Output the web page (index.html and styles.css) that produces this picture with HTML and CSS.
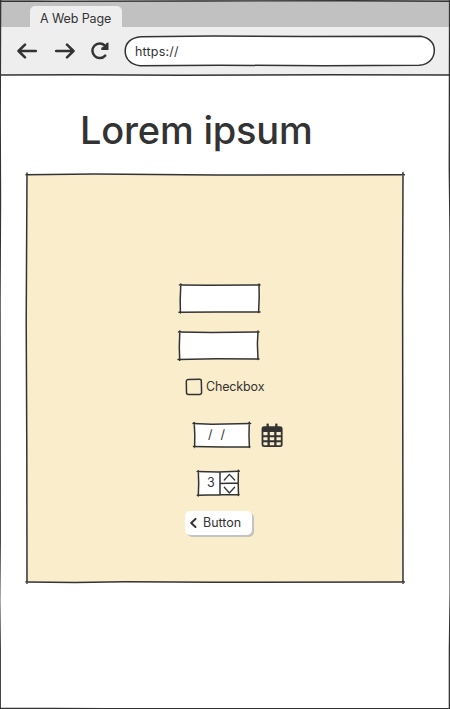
FILE: index.html
```html
<!DOCTYPE html>
<html lang="en">
<head>
<meta charset="utf-8">
<title>A Web Page</title>
<link rel="stylesheet" href="styles.css">
</head>
<body>
<div class="window">
  <header class="chrome">
    <div class="tabs"><div class="tab"><span class="tab-label">A Web Page</span></div></div>
    <div class="toolbar">
      <svg class="nav back" width="20" height="16" viewBox="0 0 20 16"><path d="M19 8H1.5M8 1.7L1.5 8L8 14.3"/></svg>
      <svg class="nav forward" width="20" height="16" viewBox="0 0 20 16"><path d="M1 8H18.5M12 1.7L18.5 8L12 14.3"/></svg>
      <svg class="nav reload" width="20" height="20" viewBox="0 0 20 20"><path d="M14.8 4.5A7.3 7.3 0 1 0 15.2 14.6"/><path class="solid" d="M18.5 1.6V8.9H11.3V6.8L14.5 5L16.6 2Z"/></svg>
      <div class="address">
        <svg class="sketch" viewBox="0 0 312 32"><path class="paper" d="M17 1.8L90 1.1L180 1.5L297 1.3C305 3 310.3 8 310.3 15.5C310.3 23 305 29.5 295 30.3L200 30.7L95 30.2L16 30.7C7 30 1.2 24 1.2 16C1.2 8 7 2.5 17 1.8Z"/></svg>
        <span class="url">https://</span>
      </div>
    </div>
  </header>
  <main>
    <h1>Lorem ipsum</h1>
    <section class="panel">
      <svg class="sketch" viewBox="0 0 380 413"><path class="cream" d="M2 3.5L190 4L378 3.8V411L190 411.3L2 411Z"/><path d="M1 3.8L70 3L190 4L379.5 3.8M378 1.5L377.6 120L378 412.5M379.5 411L190 411.2L100 410.8L50 411.4L1 410.9M2 412.5L1.8 280L1.2 150L2 2"/></svg>
      <div class="field first">
        <svg class="sketch" viewBox="0 0 84 32"><path class="paper" d="M2.8 3L81 3L80.7 29.9L2.2 30.2Z"/><path d="M1.5 3L30 3.3L82 2.9M81 2L81.2 15L80.6 30.5M82 29.9L40 30.1L1 30.2M2.4 31L2.2 18L2.8 2"/></svg>
      </div>
      <div class="field second">
        <svg class="sketch" viewBox="0 0 84 32"><path class="paper" d="M3 3L81 3L81 30L2.5 30Z"/><path d="M1.5 3L35 3.4L82 2.9M81 2L80.4 15L81 30.5M82 30L40 29.8L1 30.4M2.7 31.5L2.3 18L2.8 2"/></svg>
      </div>
      <label class="check">
        <svg width="18" height="18" viewBox="0 0 18 18"><path d="M3 1.5L14.5 1.3Q16.3 1.3 16.3 3L16.6 14.5Q16.5 16.5 14.5 16.5L3.5 16.6Q1.5 16.5 1.5 14.5L1.3 3.3Q1.4 1.5 3 1.5Z"/></svg>
        <span class="check-label">Checkbox</span>
      </label>
      <div class="date-row">
        <div class="date">
          <svg class="sketch" viewBox="0 0 60 28"><path class="paper" d="M2.4 2.8L57.5 2.5V26L2.6 25.5Z"/><path d="M1 2.6L20 3.2L58.6 2.6M57.3 1.2L57 14L57.4 26.5M58 25.8L30 26L1.5 25.4M2.6 26.5L2.8 14L2.2 1.4"/></svg>
          <span class="slash">/</span><span class="slash">/</span>
        </div>
        <svg class="calendar" width="22" height="25" viewBox="0 0 22 25"><path class="solid" d="M5.5 .8Q6.7 0 7.8 .8V3.3H14.2V.8Q15.4 0 16.5 .8V3.3H19Q21.6 3.3 21.6 6V21.5Q21.6 24 19 24H3Q.6 24 .6 21.5V6Q.6 3.3 3 3.3H5.5Z"/><path class="days" d="M2.4 9H6.5V12.2H2.4ZM8.8 9H13.2V12.2H8.8ZM15.5 9H19.8V12.2H15.5ZM2.4 14.2H6.5V17.2H2.4ZM8.8 14.2H13.2V17.2H8.8ZM15.5 14.2H19.8V17.2H15.5ZM2.4 19.2H6.5V22.2H3.2Q2.4 22.2 2.4 21.4ZM8.8 19.2H13.2V22.2H8.8ZM15.5 19.2H19.8V21.4Q19.8 22.2 19 22.2H15.5Z"/></svg>
      </div>
      <div class="stepper">
        <svg class="sketch" viewBox="0 0 46 28"><path class="paper" d="M2.5 2.8L42.6 2.5V25.7L2.5 26Z"/><path d="M1.2 2.5L22 3L43.3 2.3M42.4 1.2L42.2 14L42.5 26.5M43 25.5L24 25.8L1.3 26.2M2.3 27L2.7 14L2.3 2M24 3V26M24 14.5L42.3 14"/><path class="thin" d="M28.3 11L33.4 5.4L38.6 11M28.3 18.2L33.4 24L38.6 18.2"/></svg>
        <span class="count">3</span>
      </div>
      <button class="button" type="button"><svg width="7" height="10" viewBox="0 0 7 10"><path d="M5.5 1L1.2 5L5.5 9"/></svg><span class="button-label">Button</span></button>
    </section>
  </main>
  <svg class="frame" viewBox="0 0 450 709"><path d="M0 1L60 1.4L200 1L350 .7L450 1.2M449.6 0L449.3 170L450 230L450.2 590L449.4 650V709M450 708.6L110 708.7L0 708.2M.2 709V650L-.3 600L.2 540L0 300L.5 200L.2 120L.6 0M0 75L80 74.8L180 75.3L330 74.7L450 75"/></svg>
</div>
</body>
</html>
```
FILE: styles.css
```css
* { box-sizing: border-box; }
body { margin: 0; color: #333; font: 12.5px/16px Inter, "Liberation Sans", sans-serif; }
svg { display: block; fill: none; stroke: #333; stroke-width: 1.5; stroke-linecap: round; stroke-linejoin: round; flex: none; }
.solid { fill: #333; stroke: none; }
.paper { fill: #fff; stroke: none; }
.cream { fill: #faedcb; stroke: none; }
.days { fill: #faedcb; stroke: none; }
.thin { stroke-width: 1.3; }
.window { position: relative; width: 450px; height: 709px; overflow: hidden; background: #fff; }
.frame { position: absolute; inset: 0; width: 450px; height: 709px; pointer-events: none; stroke-width: 1.4; }
.sketch { position: absolute; inset: 0; width: 100%; height: 100%; }
.chrome { height: 75px; background: #eee; }
.tabs { height: 27px; padding: 6px 0 0 30px; background: #c1c1c1; }
.tab { width: 92px; height: 21px; padding: 5px 0 0 10px; border-radius: 5px 5px 0 0; background: #eee; }
.tab-label, .url, .check-label, .count, .button-label { display: block; white-space: nowrap; }
.tab-label { letter-spacing: -.1px; }
.toolbar { display: flex; align-items: center; height: 48px; padding-left: 17px; }
.nav { stroke-width: 2.5; }
.forward { margin-left: 18px; }
.reload { margin-left: 15px; }
.address { position: relative; width: 312px; height: 32px; margin: 0 0 0 14px; padding: 9px 11px; }
.address .paper { stroke: #333; stroke-width: 1.5; }
.url { position: relative; letter-spacing: .2px; }
h1 { margin: 29px 0 0 80px; height: 67px; font-size: 38px; line-height: 52px; font-weight: 500; letter-spacing: -.2px; white-space: nowrap; }
.panel { position: relative; display: flex; flex-direction: column; align-items: flex-start; width: 380px; height: 413px; margin-left: 25px; padding-top: 111px; }
.field { position: relative; width: 84px; height: 32px; }
.first { margin-left: 153px; }
.second { margin: 15px 0 0 151.5px; }
.check { position: relative; display: flex; align-items: center; gap: 3px; height: 18px; margin: 17px 0 0 160px; }
.check-label { letter-spacing: -.15px; }
.date-row { position: relative; display: flex; align-items: center; gap: 9px; height: 28px; margin: 25px 0 0 167px; }
.date { position: relative; display: flex; gap: 8px; width: 60px; height: 28px; padding: 6px 0 0 16px; }
.slash { position: relative; }
.stepper { position: relative; width: 46px; height: 28px; margin: 20px 0 0 171px; padding: 6px 0 0 11px; }
.count { position: relative; }
.button { position: relative; display: flex; align-items: center; gap: 6px; width: 67px; height: 24px; margin: 14px 0 0 160px; padding: 0 0 0 5px; border: 0; border-radius: 5px; background: #fff; box-shadow: 2px 2px 0 #c3c3c3; color: inherit; font: inherit; }
.button svg { stroke-width: 2; }
```
